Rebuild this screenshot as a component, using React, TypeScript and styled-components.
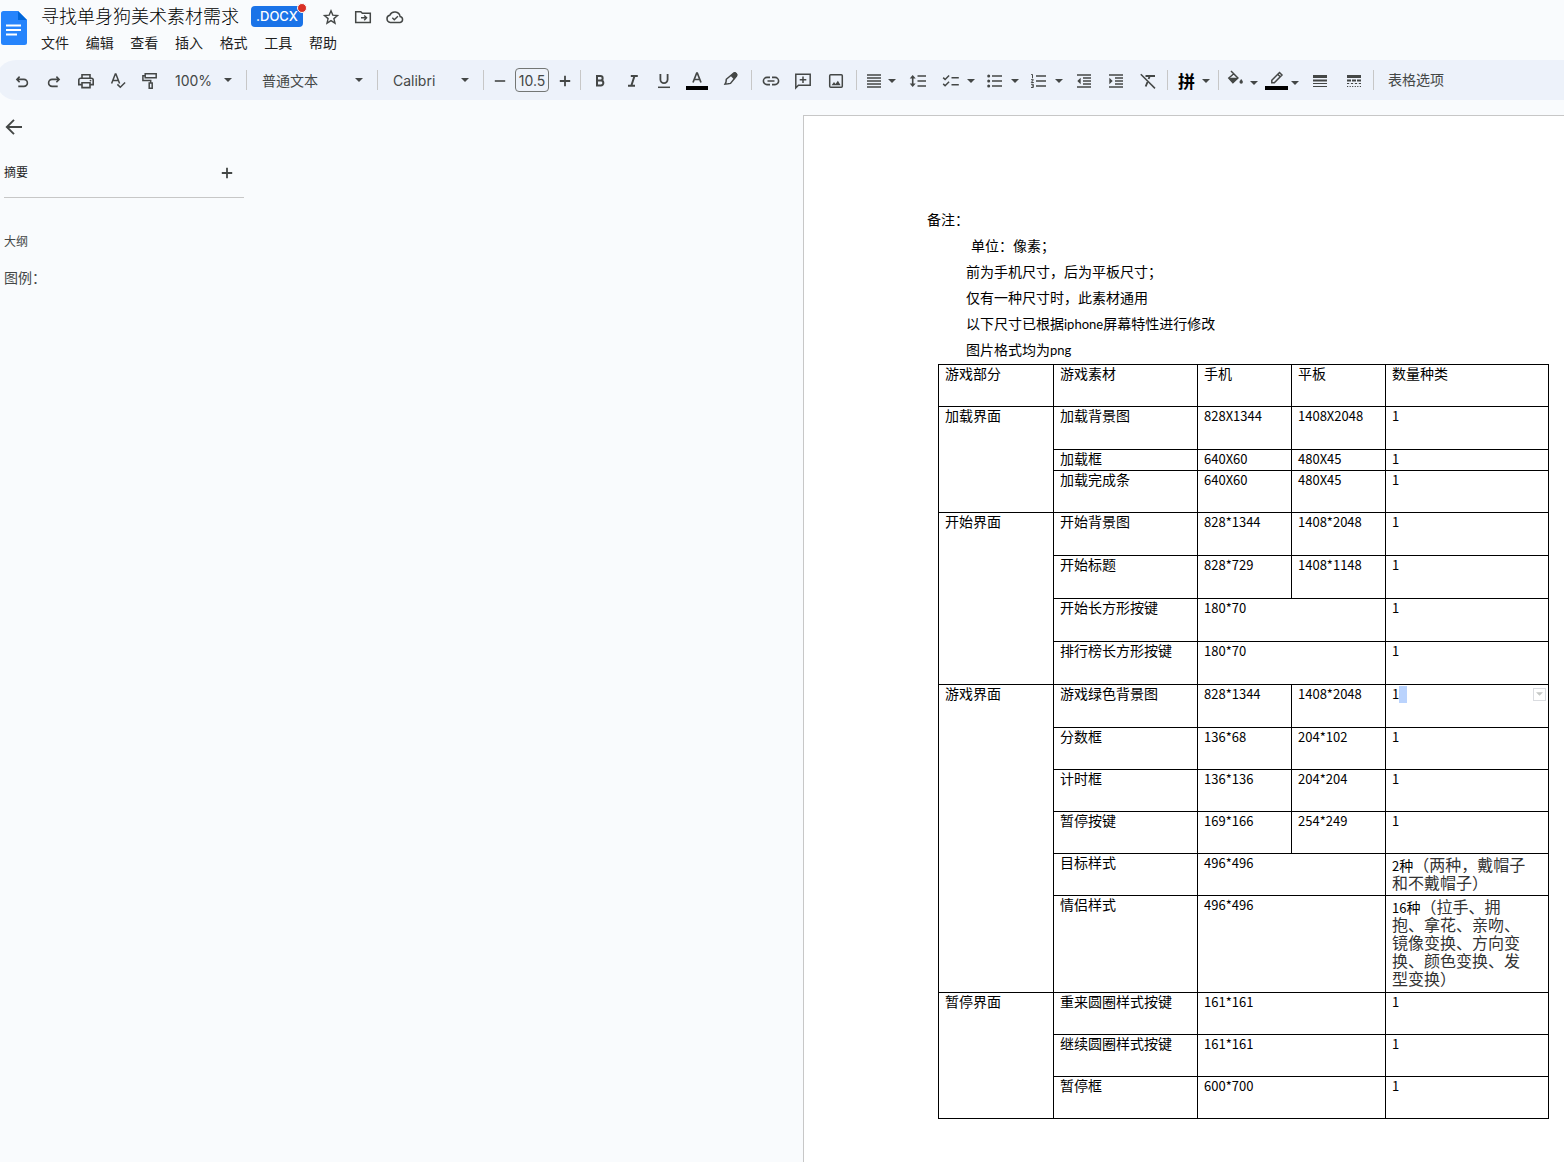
import React from "react";
import styled, { createGlobalStyle } from "styled-components";

const cjk = `"Noto Sans CJK SC", sans-serif`;
const uiFont = `Inter, ${cjk}`;
const ink = "#444746";

const GlobalStyle = createGlobalStyle`
  * { box-sizing: border-box; }
  body {
    margin: 0;
    background: #f9fbfd;
    color: #1f1f1f;
    font-family: ${uiFont};
    overflow: hidden;
  }
  button, select, input { font: inherit; color: inherit; }
  p, h1, h2 { margin: 0; font-weight: 400; }
`;

const Shell = styled.div`
  display: flex;
  flex-direction: column;
  height: 100vh;
`;

/* ---------- header ---------- */

const Header = styled.header`
  display: flex;
  gap: 14px;
  height: 60px;
`;

const LogoLink = styled.a`
  display: block;
  width: 27px;
  padding: 11px 0 0 1px;
`;

const HeaderBody = styled.div`
  display: flex;
  flex-direction: column;
`;

const TitleRow = styled.div`
  display: flex;
  align-items: center;
  height: 34px;
`;

const Title = styled.h1`
  font-size: 18px;
  line-height: 30px;
  font-weight: 300;
  color: #000;
`;

const Badge = styled.span`
  position: relative;
  display: flex;
  align-items: center;
  justify-content: center;
  width: 52px;
  height: 21px;
  margin: 0 12px 2px;
  border-radius: 4px;
  background: #1a73e8;
  color: #fff;
  font-size: 13px;
  font-weight: 500;
`;

const BadgeDot = styled.span`
  position: absolute;
  top: -3px;
  right: -4px;
  width: 10px;
  height: 10px;
  border: 1px solid #f9fbfd;
  border-radius: 50%;
  background: #d93025;
`;

const MenuBar = styled.nav`
  display: flex;
  justify-content: space-between;
  width: 296px;
`;

const PlainButton = styled.button`
  display: flex;
  align-items: center;
  justify-content: center;
  padding: 0;
  border: 0;
  background: none;
  color: ${ink};
  cursor: pointer;
`;

const MenuButton = styled(PlainButton)`
  height: 16px;
  font-size: 14px;
  color: #1f1f1f;
`;

const TitleButton = styled(PlainButton)`
  width: 32px;
  height: 32px;
`;

/* ---------- toolbar ---------- */

const Toolbar = styled.div`
  display: flex;
  flex: none;
  align-items: center;
  height: 40px;
  margin-left: -4px;
  padding-left: 10px;
  border-radius: 20px 0 0 20px;
  background: #edf2fa;
  color: ${ink};
  font-size: 14px;
  white-space: nowrap;
`;

const Tool = styled(PlainButton)<{ $w?: number; $gap?: number }>`
  flex: none;
  width: ${(p) => p.$w ?? 32}px;
  height: 32px;
  padding-top: 2px;
  gap: ${(p) => p.$gap ?? 0}px;
`;

const Divider = styled.span<{ $gap?: number }>`
  flex: none;
  width: 1px;
  height: 20px;
  margin: 0 ${(p) => p.$gap ?? 0}px;
  background: #c7c7c7;
`;

const PickBox = styled.label<{ $w: number }>`
  display: grid;
  flex: none;
  align-items: center;
  width: ${(p) => p.$w}px;
  > * { grid-area: 1 / 1; }
  > svg { justify-self: end; margin-right: 14px; pointer-events: none; }
`;

const PickSelect = styled.select<{ $pad: number }>`
  width: 100%;
  height: 28px;
  padding: 0 28px 0 ${(p) => p.$pad}px;
  border: 0;
  background: none;
  appearance: none;
  font-size: 14px;
`;

const SizeInput = styled.input`
  flex: none;
  width: 34px;
  height: 24px;
  padding: 0;
  border: 1px solid #747775;
  border-radius: 4px;
  background: none;
  text-align: center;
`;

const TextTool = styled(PlainButton)`
  height: 32px;
  padding: 0 11px 2px;
`;

const Glyph = styled.svg`
  display: block;
  flex: none;
  fill: none;
  stroke: currentColor;
  stroke-width: 1.6;
`;

const Caret = () => (
  <svg width="8" height="4" viewBox="0 0 8 4" fill={ink} aria-hidden="true">
    <path d="M0 0h8L4 4z" />
  </svg>
);

const Icon = ({ children, size = 20 }: { children: React.ReactNode; size?: number }) => (
  <Glyph width={size} height={size} viewBox="0 0 20 20" aria-hidden="true">{children}</Glyph>
);

const fill = { fill: "currentColor", stroke: "none" };

const icons = {
  undo: <><path d="M7.6 5.6 4.9 8.4l2.7 2.8M5 8.4h6.9a3.5 3.5 0 0 1 0 7H6.300" /></>,
  redo: <><path d="M12.4 5.6 15.1 8.4l-2.7 2.8M15 8.4H8.1a3.5 3.5 0 0 0 0 7h5.6" /></>,
  print: <><path d="M6 7V3.8h8V7M5.600 13.600H2.800V9a1.800 1.800 0 0 1 1.800-1.800h10.800A1.800 1.800 0 0 1 17.200 9v4.600h-2.800M6 11.800h8v4.800H6z" /><circle cx="14.5" cy="9.600" r="0.900" {...fill} /></>,
  spell: <><path d="M3.600 12.600 7.300 3h.6l3.700 9.600M4.900 9.600h5.400M9.400 13.400l2.900 2.900 4.800-4.800" strokeWidth="1.500" /></>,
  paint: <><path d="M5.200 2.800h11v4h-11zM5.200 4.800H2.900V9.500h7.800V12M9.200 12h3v5.200h-3z" strokeWidth="1.500" /></>,
  bold: <><path d="M7 5h3.400a2.200 2.200 0 0 1 0 4.500H7zM7 9.500h3.900a2.400 2.400 0 0 1 0 4.900H7z" strokeWidth="2" /></>,
  italic: <><path d="M7.800 5h7M5 14.700h7M11.500 5l-3.200 9.700" strokeWidth="2" /></>,
  underline: <><path d="M6.400 3v5.600a3.600 3.600 0 0 0 7.200 0V3" strokeWidth="1.800" /><path d="M4 16.300h12" strokeWidth="1.500" /></>,
  link: <><path d="M9 6.400H6a3.600 3.600 0 0 0 0 7.200h3M11 6.400h3a3.600 3.600 0 0 1 0 7.200h-3M6.500 10h7" /></>,
  comment: <><path d="M2.800 17V3.300h14.400v11H5.400z" strokeWidth="1.500" /><path d="M10 5.500v6.600M6.700 8.800h6.600" strokeWidth="1.500" /></>,
  image: <><rect x="3.700" y="3.700" width="12.600" height="12.600" rx="1" strokeWidth="1.500" /><path d="M5.600 14.200 8 11l1.500 1.900 2.400-3.200 2.700 4.500z" {...fill} /></>,
  align: <><path d="M3 3.900h14M3 6.900h14M3 10h14M3 13.100h14M3 16.100h14" strokeWidth="1.500" /></>,
  spacing: <><path d="M9.500 5h8.500M9.500 10h8.500M9.500 15h8.500M4.700 6v8" /><path d="M1.700 7.400h6l-3-3.300zM1.700 12.600h6l-3 3.300z" {...fill} /></>,
  checks: <><path d="m2.200 6.600 1.900 1.900 4-4M2.200 12.900l1.900 1.900 4-4M10.500 6.800h7.300M10.500 13.800h7.300" strokeWidth="1.500" /></>,
  bullets: <><path d="M7 5h10M7 10h10M7 15h10" /><circle cx="3.700" cy="5" r="1.500" {...fill} /><circle cx="3.700" cy="10" r="1.500" {...fill} /><circle cx="3.700" cy="15" r="1.500" {...fill} /></>,
  numbers: <><path d="M7 5h10M7 10h10M7 15h10" /><path d="M2.200 3.500h1.300v3.800M2 8.700h2.400L2.300 11.500h2.500M2 13.300h2.300v3.200H2M2.800 14.900h1.500" strokeWidth="1" /></>,
  outdent: <><path d="M3 3.900h14M9 6.900h8M9 10h8M9 13.100h8M3 16.100h14" strokeWidth="1.500" /><path d="M6.700 6.800v6.400L3.300 10z" {...fill} /></>,
  indent: <><path d="M3 3.900h14M9 6.900h8M9 10h8M9 13.100h8M3 16.100h14" strokeWidth="1.500" /><path d="M3.300 6.800v6.400L6.700 10z" {...fill} /></>,
  clear: <><path d="M7.500 5h9.500M11.800 5l-1.200 3M9.500 11l-1.800 4.500" strokeWidth="1.900" /><path d="M2.800 3.200 17 17.400" strokeWidth="1.500" /></>,
  weight: <><path d="M3 5.500h14" strokeWidth="3" /><path d="M3 9.500h14" strokeWidth="2" /><path d="M3 12.500h14M3 15.500h14" strokeWidth="1" /></>,
  dash: <><path d="M3 5.500h14" strokeWidth="3" /><path d="M3 9.500h4M8 9.500h4M13 9.500h4" strokeWidth="2" /><path d="M3 12.500h2.200M6.900 12.500h2.200M10.900 12.500h2.200M14.800 12.500H17M3 15.500h1.200M5.600 15.500h1.200M8.100 15.500h1.200M10.700 15.500h1.200M13.200 15.500h1.200M15.800 15.500H17" strokeWidth="1" /></>,
  star: <><path d="m10 3.800 1.800 4.300 4.700.4-3.600 3.100 1.100 4.600-4-2.500-4 2.500 1.100-4.600-3.600-3.100 4.700-.4z" strokeWidth="1.400" /></>,
  folder: <><path d="M2.700 4.700h5.100l1.500 1.500h8v9.200H2.700z" strokeWidth="1.500" /><path d="M8 10.800h5.200M11.200 8.400l2.400 2.400-2.400 2.400" strokeWidth="1.400" /></>,
  cloud: <><path d="M5.300 15.400a3.600 3.600 0 0 1-.5-7.100 5.400 5.400 0 0 1 10.300 1.200 3 3 0 0 1 0 5.900z" strokeWidth="1.500" /><path d="m7.300 10.800 2 2 3.600-3.600" strokeWidth="1.400" /></>,
  back: <><path d="M18 10H3.500M10 2.800 2.800 10l7.200 7.200" strokeWidth="1.900" /></>,
  plus: <><path d="M10 4.800v10.400M4.800 10h10.400" strokeWidth="1.800" /></>,
  minus: <><path d="M4.800 10h10.400" /></>,
};

const TextColor = () => (
  <Glyph width="22" height="24" viewBox="0 0 22 24" aria-hidden="true">
    <path d="M7 13.500 10.700 4h.6L15 13.500M8.300 10.500h5.400" strokeWidth="1.700" />
    <path d="M0 19h22" stroke="#000" strokeWidth="4" />
  </Glyph>
);

const Highlighter = () => (
  <Glyph width="20" height="24" viewBox="0 0 20 24" aria-hidden="true">
    <path d="m5.300 10.300 7.200-6.100c1.400-1.200 4.200 1.300 3 2.900l-6 7.300-2.500.4-3 .3 1-2z" strokeWidth="1.500" />
    <path d="m9.500 6.800 3.600 3.600 3-3.700c1-2-1.700-4.300-3.500-3z" {...fill} />
  </Glyph>
);

const Bucket = () => (
  <Glyph width="20" height="24" viewBox="0 0 20 24" aria-hidden="true">
    <path d="m5 2 6.900 7-5 4.600L2.800 9l5-4.200" strokeWidth="1.500" />
    <path d="M3 8.800h9l-5 5.200z" {...fill} />
    <path d="M15.200 10s-1.700 2-1.700 3a1.700 1.700 0 0 0 3.400 0c0-1-1.700-3-1.700-3z" {...fill} />
  </Glyph>
);

const BorderColor = () => (
  <Glyph width="24" height="24" viewBox="0 0 24 24" aria-hidden="true">
    <path d="m6.800 11.200 7.700-7.700 2.500 2.500-7.700 7.700H6.800zM12.700 5.300l2.500 2.500" strokeWidth="1.500" />
    <path d="M0 19h23" stroke="#000" strokeWidth="4" />
  </Glyph>
);

const InputMethod = styled.span`
  width: 20px;
  padding-left: 1px;
  font-family: ${cjk};
  font-size: 17px;
  line-height: 24px;
  font-weight: 700;
  color: #000;
`;

const LowCaret = styled.span`
  display: flex;
  padding-top: 4px;
`;

const Pick = ({ w, pad, label, value }: { w: number; pad: number; label: string; value: string }) => (
  <PickBox $w={w}>
    <PickSelect $pad={pad} aria-label={label} defaultValue={value}>
      <option>{value}</option>
    </PickSelect>
    <Caret />
  </PickBox>
);

/* ---------- workspace ---------- */

const Workspace = styled.main`
  display: grid;
  grid-template-columns: minmax(0, 803fr) minmax(761px, 761fr);
  flex: 1;
  min-height: 0;
`;

const Outline = styled.aside`
  display: flex;
  flex-direction: column;
  align-items: flex-start;
  width: 244px;
  padding: 17px 0 0 4px;
`;

const SummaryRow = styled.div`
  display: flex;
  align-items: center;
  justify-content: space-between;
  width: 100%;
  height: 49px;
  margin-top: 12px;
  padding-right: 7px;
  border-bottom: 1px solid #c7c7c7;
`;

const SideLabel = styled.h2<{ $muted?: boolean }>`
  font-size: 12px;
  line-height: 20px;
  color: ${(p) => (p.$muted ? ink : "#1f1f1f")};
`;

const OutlineHead = styled.div`
  padding: 34px 0 16px;
`;

const OutlineLink = styled.a`
  font-size: 14px;
  line-height: 20px;
  color: ${ink};
  text-decoration: none;
`;

const Page = styled.article`
  margin-top: 15px;
  padding: 90px 0 0 123px;
  border: 1px solid #c7c7c7;
  border-width: 1px 0 0 1px;
  background: #fff;
  color: #000;
  font-family: ${cjk};
  font-size: 14px;
  overflow: hidden;
`;

const Note = styled.p<{ $indent?: number }>`
  padding-left: ${(p) => p.$indent ?? 0}px;
  line-height: 26px;
`;

const Latin = styled.span`
  font-family: Lato, sans-serif;
  font-size: 13px;
  line-height: 16px;
`;

const Num = styled.span`
  font-size: 13px;
  line-height: 12px;
`;

const Table = styled.table`
  width: 611px;
  margin: 2px 0 0 11px;
  border-collapse: collapse;
  table-layout: fixed;
`;

const Row = styled.tr<{ $h: number }>`
  height: ${(p) => p.$h}px;
`;

const Cell = styled.td`
  padding: 0 18px 0 6px;
  border: 1px solid #000;
  line-height: 16px;
  vertical-align: top;
`;

const HeadCell = styled(Cell).attrs({ as: "th" })`
  font-weight: 400;
  text-align: left;
`;

const NameCell = styled(Cell)`
  padding-right: 0;
`;

const Remark = styled.div`
  padding-top: 1px;
  font-size: 16px;
  line-height: 18px;
  color: #333;
`;

const RemarkLead = styled.span`
  font-size: 14px;
  line-height: 14px;
  color: #000;
`;

const ActiveCell = styled.div`
  display: flex;
  align-items: center;
  height: 18px;
  margin-right: -16px;
`;

const Selection = styled.span`
  width: 8px;
  height: 17px;
  background: #bad3fd;
`;

const CellMenu = styled(PlainButton)`
  width: 13px;
  height: 13px;
  margin-left: auto;
  border: 1px solid #dadce0;
  background: #fff;
  color: #c4c7c5;
`;

type Item = { h: number; name: string; phone: string; pad?: string; count?: React.ReactNode };
type Section = { title: string; items: Item[] };

const one = <Num>1</Num>;

const sections: Section[] = [
  {
    title: "加载界面",
    items: [
      { h: 43, name: "加载背景图", phone: "828X1344", pad: "1408X2048" },
      { h: 21, name: "加载框", phone: "640X60", pad: "480X45" },
      { h: 42, name: "加载完成条", phone: "640X60", pad: "480X45" },
    ],
  },
  {
    title: "开始界面",
    items: [
      { h: 43, name: "开始背景图", phone: "828*1344", pad: "1408*2048" },
      { h: 43, name: "开始标题", phone: "828*729", pad: "1408*1148" },
      { h: 43, name: "开始长方形按键", phone: "180*70" },
      { h: 43, name: "排行榜长方形按键", phone: "180*70" },
    ],
  },
  {
    title: "游戏界面",
    items: [
      {
        h: 43,
        name: "游戏绿色背景图",
        phone: "828*1344",
        pad: "1408*2048",
        count: (
          <ActiveCell>
            {one}
            <Selection />
            <CellMenu aria-label="单元格选项">
              <svg width="7" height="4" viewBox="0 0 8 4" fill="currentColor"><path d="M0 0h8L4 4z" /></svg>
            </CellMenu>
          </ActiveCell>
        ),
      },
      { h: 42, name: "分数框", phone: "136*68", pad: "204*102" },
      { h: 42, name: "计时框", phone: "136*136", pad: "204*204" },
      { h: 42, name: "暂停按键", phone: "169*166", pad: "254*249" },
      {
        h: 42,
        name: "目标样式",
        phone: "496*496",
        count: <Remark><RemarkLead><Num>2</Num>种</RemarkLead>（两种，戴帽子和不戴帽子）</Remark>,
      },
      {
        h: 97,
        name: "情侣样式",
        phone: "496*496",
        count: <Remark><RemarkLead><Num>16</Num>种</RemarkLead>（拉手、拥抱、拿花、亲吻、镜像变换、方向变换、颜色变换、发型变换）</Remark>,
      },
    ],
  },
  {
    title: "暂停界面",
    items: [
      { h: 42, name: "重来圆圈样式按键", phone: "161*161" },
      { h: 42, name: "继续圆圈样式按键", phone: "161*161" },
      { h: 42, name: "暂停框", phone: "600*700" },
    ],
  },
];

const menus = ["文件", "编辑", "查看", "插入", "格式", "工具", "帮助"];

export default function App() {
  return (
    <Shell>
      <GlobalStyle />
      <Header>
        <LogoLink href="#" aria-label="文档首页">
          <svg width="26" height="34" viewBox="0 0 26 34" aria-hidden="true">
            <path d="M2.500 0H17l9 9v22.500a2.500 2.500 0 0 1-2.500 2.500h-21A2.500 2.500 0 0 1 0 31.500v-29A2.500 2.500 0 0 1 2.500 0z" fill="#2684fc" />
            <path d="M17 0l9 9h-9z" fill="#0066da" />
            <path d="M5 14.500h15M5 19h15M5 23.500h11" stroke="#fff" strokeWidth="2" />
          </svg>
        </LogoLink>
        <HeaderBody>
          <TitleRow>
            <Title>寻找单身狗美术素材需求</Title>
            <Badge>.DOCX<BadgeDot /></Badge>
            <TitleButton aria-label="加星标"><Icon>{icons.star}</Icon></TitleButton>
            <TitleButton aria-label="移动"><Icon>{icons.folder}</Icon></TitleButton>
            <TitleButton aria-label="文档状态"><Icon>{icons.cloud}</Icon></TitleButton>
          </TitleRow>
          <MenuBar>
            {menus.map((m) => <MenuButton key={m}>{m}</MenuButton>)}
          </MenuBar>
        </HeaderBody>
      </Header>

      <Toolbar role="toolbar">
        <Tool aria-label="撤消"><Icon>{icons.undo}</Icon></Tool>
        <Tool aria-label="重做"><Icon>{icons.redo}</Icon></Tool>
        <Tool aria-label="打印"><Icon>{icons.print}</Icon></Tool>
        <Tool aria-label="拼写检查"><Icon>{icons.spell}</Icon></Tool>
        <Tool aria-label="格式刷"><Icon>{icons.paint}</Icon></Tool>
        <Pick w={80} pad={9} label="缩放" value="100%" />
        <Divider />
        <Pick w={130} pad={15} label="样式" value="普通文本" />
        <Divider />
        <Pick w={105} pad={15} label="字体" value="Calibri" />
        <Divider />
        <Tool $w={31} aria-label="减小字号"><Icon>{icons.minus}</Icon></Tool>
        <SizeInput aria-label="字号" defaultValue="10.5" />
        <Tool $w={31} aria-label="增大字号"><Icon>{icons.plus}</Icon></Tool>
        <Divider />
        <Tool $w={38} aria-label="粗体"><Icon>{icons.bold}</Icon></Tool>
        <Tool $w={28} aria-label="斜体"><Icon>{icons.italic}</Icon></Tool>
        <Tool $w={34} aria-label="下划线"><Icon>{icons.underline}</Icon></Tool>
        <Tool aria-label="文字颜色"><TextColor /></Tool>
        <Tool $w={35} aria-label="突出显示颜色"><Highlighter /></Tool>
        <Divider $gap={3} />
        <Tool aria-label="插入链接"><Icon>{icons.link}</Icon></Tool>
        <Tool aria-label="添加评论"><Icon>{icons.comment}</Icon></Tool>
        <Tool $w={34} aria-label="插入图片"><Icon>{icons.image}</Icon></Tool>
        <Divider $gap={3} />
        <Tool $w={40} $gap={4} aria-label="对齐"><Icon>{icons.align}</Icon><Caret /></Tool>
        <Tool $w={36} aria-label="行间距"><Icon>{icons.spacing}</Icon></Tool>
        <Tool $w={44} $gap={6} aria-label="核对清单"><Icon>{icons.checks}</Icon><Caret /></Tool>
        <Tool $w={44} $gap={6} aria-label="项目符号"><Icon>{icons.bullets}</Icon><Caret /></Tool>
        <Tool $w={44} $gap={6} aria-label="编号"><Icon>{icons.numbers}</Icon><Caret /></Tool>
        <Tool aria-label="减少缩进"><Icon>{icons.outdent}</Icon></Tool>
        <Tool aria-label="增加缩进"><Icon>{icons.indent}</Icon></Tool>
        <Tool aria-label="清除格式"><Icon>{icons.clear}</Icon></Tool>
        <Divider $gap={3} />
        <Tool $w={44} $gap={6} aria-label="输入法"><InputMethod>拼</InputMethod><Caret /></Tool>
        <Divider $gap={3} />
        <Tool $w={40} $gap={4} aria-label="背景颜色"><Bucket /><LowCaret><Caret /></LowCaret></Tool>
        <Tool $w={40} $gap={2} aria-label="边框颜色"><BorderColor /><LowCaret><Caret /></LowCaret></Tool>
        <Tool $w={36} aria-label="边框宽度"><Icon>{icons.weight}</Icon></Tool>
        <Tool aria-label="边框样式"><Icon>{icons.dash}</Icon></Tool>
        <Divider $gap={3} />
        <TextTool>表格选项</TextTool>
      </Toolbar>

      <Workspace>
        <Outline>
          <PlainButton aria-label="关闭大纲"><Icon>{icons.back}</Icon></PlainButton>
          <SummaryRow>
            <SideLabel>摘要</SideLabel>
            <PlainButton aria-label="添加摘要"><Icon>{icons.plus}</Icon></PlainButton>
          </SummaryRow>
          <OutlineHead><SideLabel $muted>大纲</SideLabel></OutlineHead>
          <OutlineLink href="#legend">图例：</OutlineLink>
        </Outline>

        <Page>
          <Note>备注：</Note>
          <Note $indent={44}>单位：像素；</Note>
          <Note $indent={39}>前为手机尺寸，后为平板尺寸；</Note>
          <Note $indent={39}>仅有一种尺寸时，此素材通用</Note>
          <Note $indent={39}>以下尺寸已根据<Latin>iphone</Latin>屏幕特性进行修改</Note>
          <Note $indent={39}>图片格式均为<Latin>png</Latin></Note>
          <Table>
            <colgroup>
              <col width="115" />
              <col width="144" />
              <col width="94" />
              <col width="94" />
              <col width="163" />
            </colgroup>
            <thead>
              <Row $h={42}>
                {["游戏部分", "游戏素材", "手机", "平板", "数量种类"].map((t) => <HeadCell key={t}>{t}</HeadCell>)}
              </Row>
            </thead>
            <tbody>
              {sections.map((s) => s.items.map((it, i) => (
                <Row key={s.title + it.name} $h={it.h}>
                  {i === 0 && <Cell rowSpan={s.items.length}>{s.title}</Cell>}
                  <NameCell>{it.name}</NameCell>
                  <Cell colSpan={it.pad ? 1 : 2}><Num>{it.phone}</Num></Cell>
                  {it.pad && <Cell><Num>{it.pad}</Num></Cell>}
                  <Cell>{it.count ?? one}</Cell>
                </Row>
              )))}
            </tbody>
          </Table>
        </Page>
      </Workspace>
    </Shell>
  );
}
